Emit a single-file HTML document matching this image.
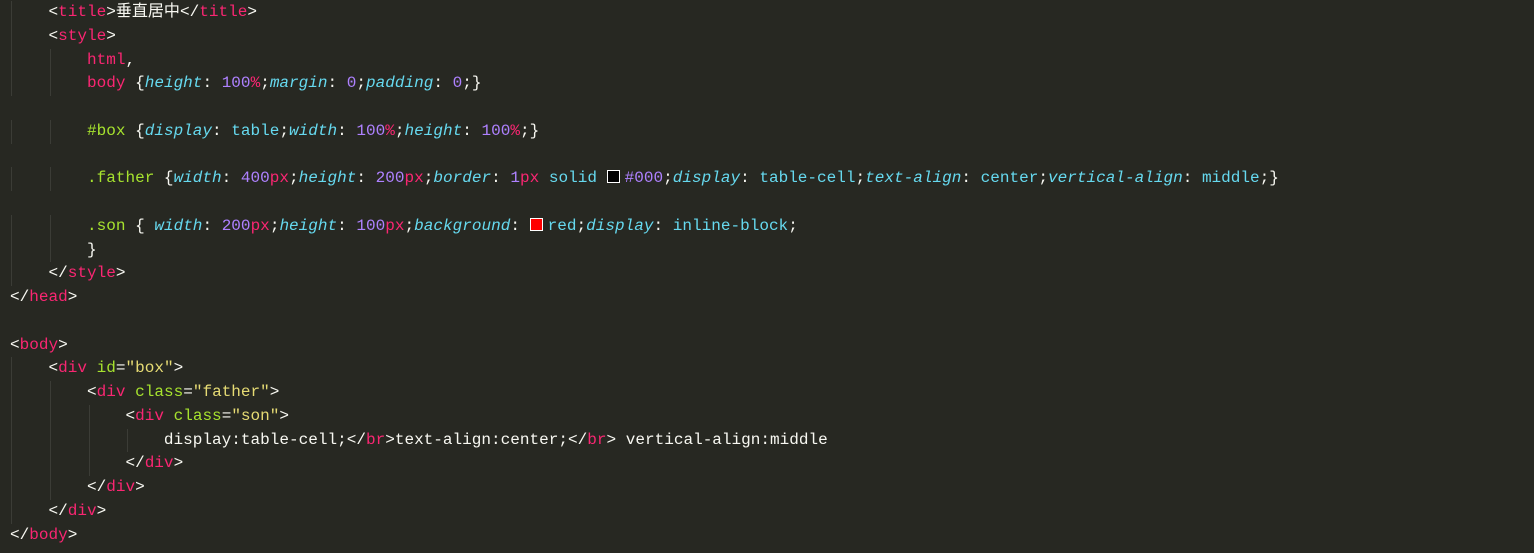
<!DOCTYPE html>
<html><head><meta charset="utf-8"><style>
html,body{margin:0;padding:0;background:#272822;width:1534px;height:553px;overflow:hidden}
#c{position:absolute;left:10px;top:1px;font-family:"Liberation Mono","Noto Sans CJK SC",monospace;font-size:16.05px;line-height:23.75px;color:#f8f8f2}
.l{height:23.75px;position:relative;white-space:pre}
.t{color:#f92672}.a{color:#a6e22e}.s{color:#e6db74}.v{color:#66d9ef}.p{color:#66d9ef;font-style:italic}.n{color:#ae81ff}
.sw{display:inline-block;width:11px;height:11px;border:1px solid #fff;margin-right:5px;vertical-align:-1px}
.g{position:absolute;top:0;width:1px;height:23.75px;background:#3b3c36}
</style></head><body><div id="c">
<div class="l"><i class="g" style="left:1px"></i>    &lt;<span class="t">title</span>&gt;垂直居中&lt;/<span class="t">title</span>&gt;</div>
<div class="l"><i class="g" style="left:1px"></i>    &lt;<span class="t">style</span>&gt;</div>
<div class="l"><i class="g" style="left:1px"></i><i class="g" style="left:40px"></i>        <span class="t">html</span>,</div>
<div class="l"><i class="g" style="left:1px"></i><i class="g" style="left:40px"></i>        <span class="t">body</span> {<span class="p">height</span>: <span class="n">100</span><span class="t">%</span>;<span class="p">margin</span>: <span class="n">0</span>;<span class="p">padding</span>: <span class="n">0</span>;}</div>
<div class="l"></div>
<div class="l"><i class="g" style="left:1px"></i><i class="g" style="left:40px"></i>        <span class="a">#box</span> {<span class="p">display</span>: <span class="v">table</span>;<span class="p">width</span>: <span class="n">100</span><span class="t">%</span>;<span class="p">height</span>: <span class="n">100</span><span class="t">%</span>;}</div>
<div class="l"></div>
<div class="l"><i class="g" style="left:1px"></i><i class="g" style="left:40px"></i>        <span class="a">.father</span> {<span class="p">width</span>: <span class="n">400</span><span class="t">px</span>;<span class="p">height</span>: <span class="n">200</span><span class="t">px</span>;<span class="p">border</span>: <span class="n">1</span><span class="t">px</span> <span class="v">solid</span> <span class="sw" style="background:#000"></span><span class="n">#000</span>;<span class="p">display</span>: <span class="v">table-cell</span>;<span class="p">text-align</span>: <span class="v">center</span>;<span class="p">vertical-align</span>: <span class="v">middle</span>;}</div>
<div class="l"></div>
<div class="l"><i class="g" style="left:1px"></i><i class="g" style="left:40px"></i>        <span class="a">.son</span> { <span class="p">width</span>: <span class="n">200</span><span class="t">px</span>;<span class="p">height</span>: <span class="n">100</span><span class="t">px</span>;<span class="p">background</span>: <span class="sw" style="background:#f00"></span><span class="v">red</span>;<span class="p">display</span>: <span class="v">inline-block</span>;</div>
<div class="l"><i class="g" style="left:1px"></i><i class="g" style="left:40px"></i>        }</div>
<div class="l"><i class="g" style="left:1px"></i>    &lt;/<span class="t">style</span>&gt;</div>
<div class="l">&lt;/<span class="t">head</span>&gt;</div>
<div class="l"></div>
<div class="l">&lt;<span class="t">body</span>&gt;</div>
<div class="l"><i class="g" style="left:1px"></i>    &lt;<span class="t">div</span> <span class="a">id</span>=<span class="s">"box"</span>&gt;</div>
<div class="l"><i class="g" style="left:1px"></i><i class="g" style="left:40px"></i>        &lt;<span class="t">div</span> <span class="a">class</span>=<span class="s">"father"</span>&gt;</div>
<div class="l"><i class="g" style="left:1px"></i><i class="g" style="left:40px"></i><i class="g" style="left:79px"></i>            &lt;<span class="t">div</span> <span class="a">class</span>=<span class="s">"son"</span>&gt;</div>
<div class="l"><i class="g" style="left:1px"></i><i class="g" style="left:40px"></i><i class="g" style="left:79px"></i><i class="g" style="left:117px"></i>                display:table-cell;&lt;/<span class="t">br</span>&gt;text-align:center;&lt;/<span class="t">br</span>&gt; vertical-align:middle</div>
<div class="l"><i class="g" style="left:1px"></i><i class="g" style="left:40px"></i><i class="g" style="left:79px"></i>            &lt;/<span class="t">div</span>&gt;</div>
<div class="l"><i class="g" style="left:1px"></i><i class="g" style="left:40px"></i>        &lt;/<span class="t">div</span>&gt;</div>
<div class="l"><i class="g" style="left:1px"></i>    &lt;/<span class="t">div</span>&gt;</div>
<div class="l">&lt;/<span class="t">body</span>&gt;</div>
</div></body></html>
